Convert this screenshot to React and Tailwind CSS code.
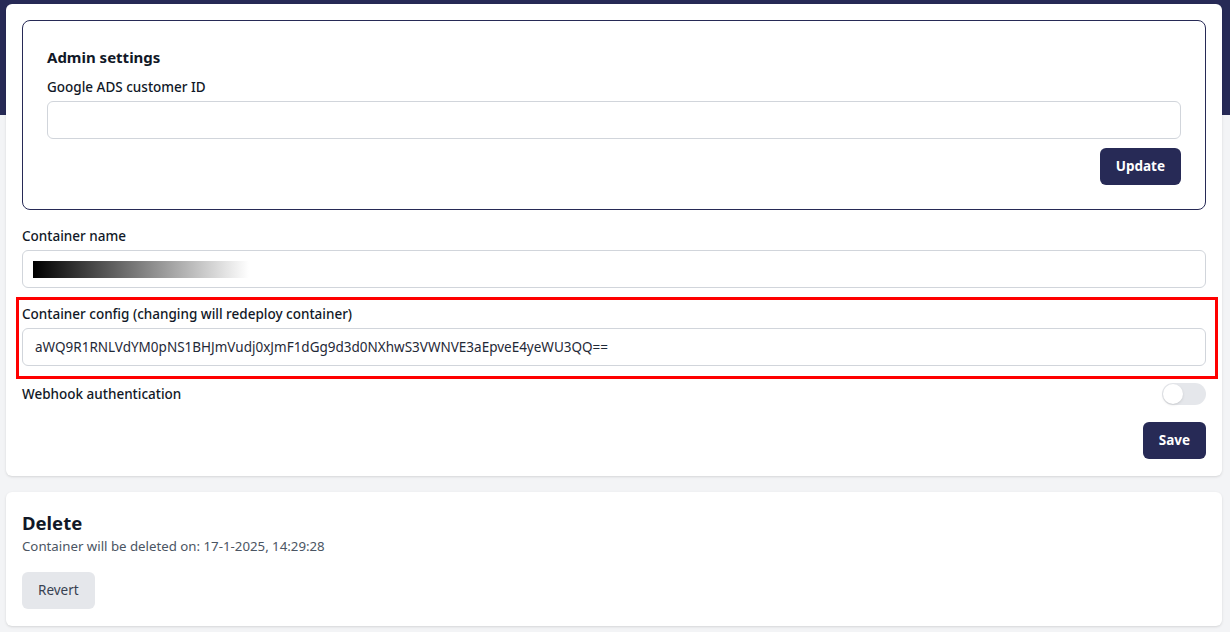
import React, { useState } from 'react';

const FONT = { fontFamily: '"Noto Sans", "Open Sans", sans-serif' };

function Toggle({ on, onChange }) {
  return (
    <button
      onClick={() => onChange(!on)}
      className={`relative w-[44px] h-[22px] rounded-full transition ${on ? 'bg-[#272a56]' : 'bg-[#e5e7eb]'}`}
    >
      <span
        className={`absolute top-[1px] h-[20px] w-[20px] rounded-full bg-white shadow transition ${on ? 'left-[23px]' : 'left-[1px]'}`}
      />
    </button>
  );
}

export default function App() {
  const [customerId, setCustomerId] = useState('');
  const [config, setConfig] = useState('aWQ9R1RNLVdYM0pNS1BHJmVudj0xJmF1dGg9d3d0NXhwS3VWNVE3aEpveE4yeWU3QQ==');
  const [webhookAuth, setWebhookAuth] = useState(false);

  return (
    <div
      className="min-h-[632px] bg-[linear-gradient(to_bottom,#272a56_115px,#f3f4f6_115px)] pl-[6px] pr-[8px] pt-[4px] pb-[6px] text-[#111827]"
      style={FONT}
    >
      {/* settings card */}
      <div className="bg-white rounded-md shadow-sm px-4 pt-4 pb-[17px]">
        <div className="border border-[#272a56] rounded-lg px-6 pt-[24px] pb-[24px]">
          <h2 className="text-[15px] leading-6 font-bold">Admin settings</h2>
          <label className="block mt-[8px] text-[13.5px] leading-5 font-medium">Google ADS customer ID</label>
          <input
            value={customerId}
            onChange={(e) => setCustomerId(e.target.value)}
            className="mt-[4px] w-full h-[38px] rounded-md border border-[#d1d5db] px-3 text-[13.5px] outline-none"
          />
          <div className="flex justify-end mt-[9px]">
            <button className="h-[37px] px-[16px] rounded-md bg-[#272a56] text-white text-[13.5px] font-bold">Update</button>
          </div>
        </div>

        <label className="block mt-[16px] text-[13.5px] leading-5 font-medium">Container name</label>
        <div className="mt-[4px] w-full h-[38px] rounded-md border border-[#d1d5db] px-[10px] flex items-center">
          <div className="h-[17px] w-[216px] bg-[linear-gradient(to_right,#000,#fff)]" />
        </div>

        <div className="relative mt-[9px] pt-[7px] pb-[13px]">
          <div className="absolute -left-[6px] -right-[12px] top-0 bottom-0 border-[3px] border-[#ff0000] pointer-events-none" />
          <label className="block text-[13.5px] leading-5 font-medium">Container config (changing will redeploy container)</label>
          <input
            value={config}
            onChange={(e) => setConfig(e.target.value)}
            className="mt-[4px] w-full h-[38px] rounded-md border border-[#d1d5db] px-[12px] text-[13.5px] text-[#1f2937] outline-none"
          />
        </div>

        <div className="flex items-center justify-between mt-[4px]">
          <span className="text-[13.5px] leading-5 font-medium">Webhook authentication</span>
          <Toggle on={webhookAuth} onChange={setWebhookAuth} />
        </div>

        <div className="flex justify-end mt-[17px]">
          <button className="h-[37px] px-[16px] rounded-md bg-[#272a56] text-white text-[13.5px] font-bold">Save</button>
        </div>
      </div>

      {/* delete card */}
      <div className="mt-[16px] bg-white rounded-md shadow-sm px-4 pt-[19px] pb-[17px]">
        <h2 className="text-[18.5px] leading-6 font-bold">Delete</h2>
        <p className="mt-[1px] text-[13.25px] leading-5 text-[#4b5563]">Container will be deleted on: 17-1-2025, 14:29:28</p>
        <button className="mt-[16px] h-[37px] px-[16px] rounded-md bg-[#e5e7eb] text-[13.5px] text-[#374151]">Revert</button>
      </div>
    </div>
  );
}
